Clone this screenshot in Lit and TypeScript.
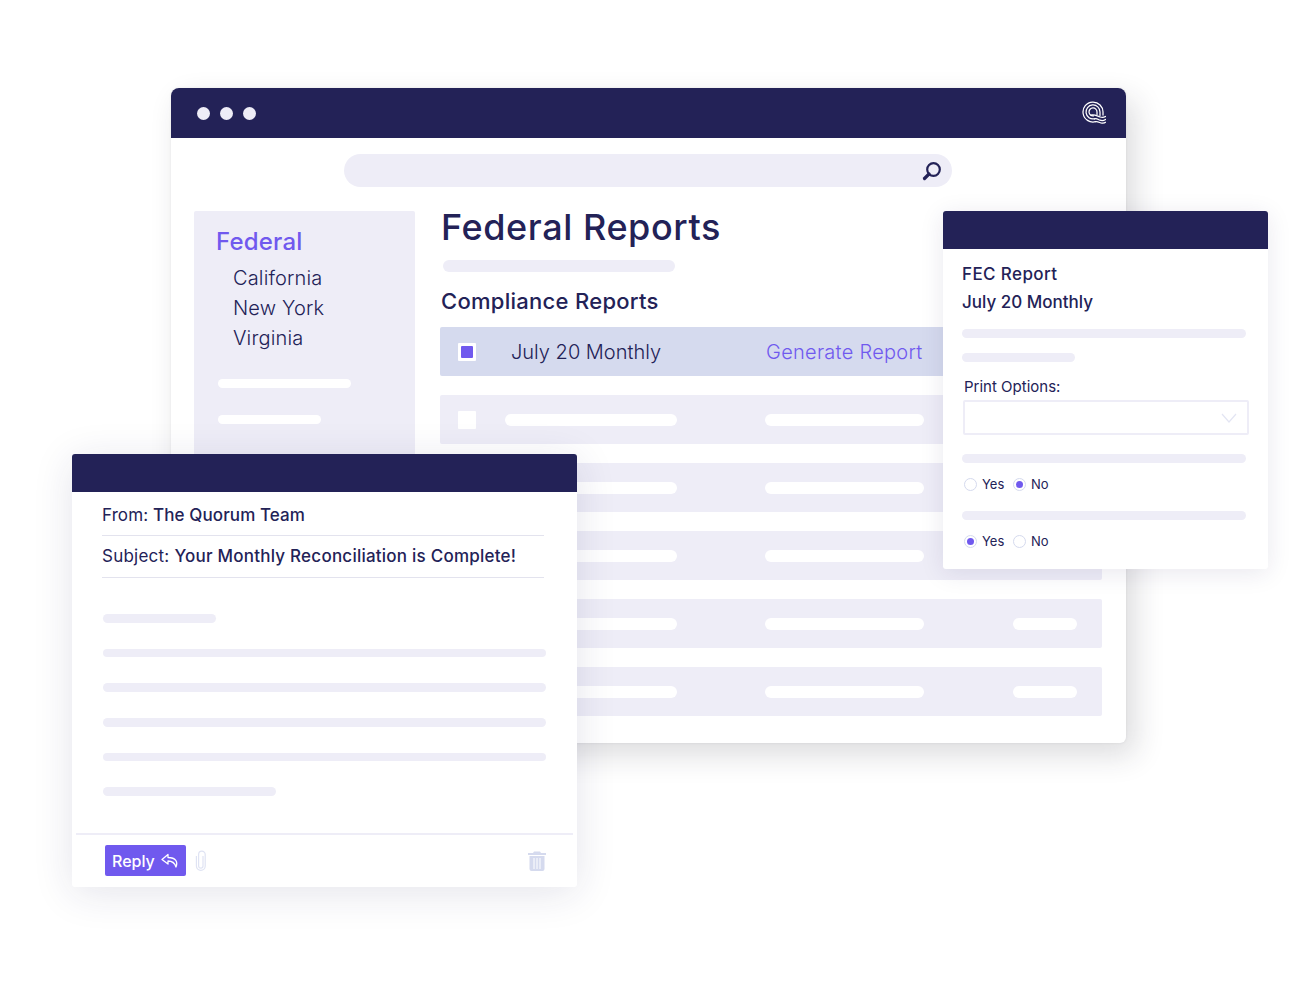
import { LitElement, html, css } from "lit";
import { customElement } from "lit/decorators.js";

@customElement("app-root")
export class AppRoot extends LitElement {
  static styles = css`
    :host { display: block; width: 1300px; height: 999px; position: relative; background: #fff; overflow: hidden;
      font-family: "Inter", "Liberation Sans", sans-serif; color: #232257; }
    .win { position: absolute; background: #fff; display: flex; flex-direction: column; box-sizing: border-box; }
    .main { left: 171px; top: 88px; width: 955px; height: 655px; border-radius: 8px 8px 6px 6px;
      box-shadow: 9px 12px 30px rgba(40,40,50,.16), 0 0 3px rgba(40,40,50,.08); }
    .bar { background: #232257; flex: none; }
    .main > .bar { height: 50px; border-radius: 8px 8px 0 0; display: flex; align-items: center; padding: 0 20px 0 26px; gap: 10px; }
    .dot { width: 13px; height: 13px; border-radius: 50%; background: #eeedf7; }
    .logo { margin-left: auto; display: block; }
    .search { margin: 16px 0 0 173px; width: 608px; height: 33px; border-radius: 17px; background: #eeedf7; flex: none;
      display: flex; align-items: center; justify-content: flex-end; padding-right: 9px; box-sizing: border-box; }
    .body { display: flex; margin: 24px 24px 0 23px; gap: 25px; flex: 1; min-height: 0; }
    .side { width: 221px; height: 300px; background: #eeedf7; border-radius: 2px; padding: 16px 0 0 22px; box-sizing: border-box; flex: none; }
    .side .fed { font-size: 24px; line-height: 30px; color: #7059ee; font-weight: 500; letter-spacing: .2px; }
    .side ul { list-style: none; margin: 6px 0 0 17px; padding: 0; font-size: 20px; line-height: 30px; font-weight: 300; letter-spacing: .15px; }
    .side .p1 { margin: 26px 0 0 2px; width: 133px; }
    .side .p2 { margin: 27px 0 0 2px; width: 103px; }
    .pill { height: 9px; border-radius: 5px; background: #fff; }
    .content { flex: 1; min-width: 0; }
    h1 { margin: -4px 0 0 1px; font-size: 36px; line-height: 40px; font-weight: 500; letter-spacing: .58px; }
    .sub { width: 232px; height: 12px; border-radius: 6px; background: #eeedf7; margin: 13px 0 0 3px; }
    h2 { margin: 15px 0 0 1px; font-size: 22px; line-height: 28px; font-weight: 500; letter-spacing: .28px; }
    .rows { display: flex; flex-direction: column; gap: 19px; margin-top: 12px; }
    .row { height: 49px; background: #eeedf7; border-radius: 2px; display: flex; align-items: center; padding-left: 18px; box-sizing: border-box; }
    .row.sel { background: #d5daee; font-size: 20px; font-weight: 300; }
    .check { width: 18px; height: 18px; background: #fff; border-radius: 1px; flex: none; display: flex; align-items: center; justify-content: center; }
    .check i { width: 12px; height: 12px; background: #7059ee; border-radius: 1px; }
    .row .name { margin-left: 35px; width: 255px; }
    .row .gen { color: #7059ee; letter-spacing: .27px; }
    .row .a { margin-left: 29px; width: 172px; height: 12px; border-radius: 6px; background: #fff; }
    .row .b { margin-left: 88px; width: 159px; height: 12px; border-radius: 6px; background: #fff; }
    .row .c { margin-left: 89px; width: 64px; height: 12px; border-radius: 6px; background: #fff; }

    .fec { left: 943px; top: 211px; width: 325px; height: 358px; border-radius: 3px; box-shadow: 0 4px 24px rgba(35,34,87,.10); }
    .fec > .bar { height: 38px; border-radius: 3px 3px 0 0; }
    .fec .in { padding: 11px 19px 0 19px; display: flex; flex-direction: column; }
    .fec b { font-size: 17px; line-height: 28px; font-weight: 500; }
    .fec b.ttl { letter-spacing: .4px; }
    .lav { height: 9px; border-radius: 5px; background: #eeedf7; }
    .fec .l1 { margin-top: 13px; width: 284px; }
    .fec .l2 { margin-top: 15px; width: 113px; }
    .fec label { font-size: 15px; line-height: 20px; margin: 15px 0 0 2px; }
    .select { margin: 3px 0 0 1px; width: 286px; height: 35px; box-sizing: border-box; border: 2px solid #eeedf7; border-radius: 2px;
      display: flex; align-items: center; justify-content: flex-end; padding-right: 10px; }
    .fec .l3 { margin-top: 19px; width: 284px; }
    .radios { display: flex; align-items: center; height: 20px; margin: 11px 0 0 2px; font-size: 13px; }
    .fec .l4 { margin-top: 17px; width: 284px; }
    .r { width: 13px; height: 13px; border: 1px solid #d5daee; border-radius: 50%; box-sizing: border-box; flex: none; display: flex; align-items: center; justify-content: center; background: #fff; }
    .r i { width: 7px; height: 7px; border-radius: 50%; background: #7059ee; }
    .radios span { margin-left: 5px; width: 31px; }

    .mail { left: 72px; top: 454px; width: 505px; height: 433px; border-radius: 3px; box-shadow: 0 6px 40px rgba(35,34,87,.12); }
    .mail > .bar { height: 38px; border-radius: 3px 3px 0 0; }
    .hdr { margin: 0 33px 0 30px; font-size: 17px; line-height: 24px; border-bottom: 1px solid #e3e3ee; padding: 11px 0 8px 0; letter-spacing: .1px; }
    .hdr b { font-weight: 500; }
    .hdr.subj { padding-top: 8px; padding-bottom: 9px; letter-spacing: .23px; }
    .text { margin: 36px 31px 0 31px; display: flex; flex-direction: column; gap: 26px; }
    .text .lav { height: 8.7px; }
    .text .s1 { width: 113px; }
    .text .s2 { width: 173px; }
    .foot { margin: auto 4px 0 4px; border-top: 2px solid #eeedf7; height: 54px; box-sizing: border-box; display: flex; align-items: center; padding: 0 27px 0 29px; }
    .reply { width: 81px; height: 31px; background: #7059ee; color: #fff; border-radius: 2px; font-size: 16px; font-weight: 500; display: flex; align-items: center; gap: 6px; padding-left: 7px; box-sizing: border-box; margin-top: -1px; }
    .clip { margin-left: 9px; display: block; }
    .trash { margin-left: auto; display: block; margin-top: -1px; }
  `;

  private logo() {
    return html`<svg class="logo" width="24" height="24" viewBox="0 0 24 24" fill="none" stroke="#fff" stroke-width="1.25" stroke-linecap="round">
      <path d="M13.500 20.700A10 10 0 1 1 21 11.500V14" />
      <path d="M12.500 17.800A7 7 0 1 1 18 11V14.500" />
      <path d="M11.500 14.900A4 4 0 1 1 15 11V13.500" />
      <path d="M9 14.200C12 13 15 15 18 16S22 16.500 23.500 15.500" />
      <path d="M12.500 17.800C15 17 16 18.500 18 19.200S22 19.500 23.500 18.500" />
      <path d="M13.500 20.700C16 20.200 18 22 20 22.200S22.800 22 23.500 21.300" />
    </svg>`;
  }

  private row() {
    return html`<div class="row"><div class="check"></div><div class="a"></div><div class="b"></div><div class="c"></div></div>`;
  }

  private radio(on: boolean) {
    return html`<div class="r">${on ? html`<i></i>` : ""}</div>`;
  }

  render() {
    return html`
      <div class="win main">
        <div class="bar"><div class="dot"></div><div class="dot"></div><div class="dot"></div>${this.logo()}</div>
        <div class="search">
          <svg width="22" height="22" viewBox="0 0 22 22" fill="none" stroke="#232257">
            <circle cx="12.500" cy="9.500" r="6.300" stroke-width="2.200" />
            <path d="M8 14 L3.500 18.500" stroke-width="3.200" stroke-linecap="round" />
          </svg>
        </div>
        <div class="body">
          <div class="side">
            <div class="fed">Federal</div>
            <ul><li>California</li><li>New York</li><li>Virginia</li></ul>
            <div class="pill p1"></div>
            <div class="pill p2"></div>
          </div>
          <div class="content">
            <h1>Federal Reports</h1>
            <div class="sub"></div>
            <h2>Compliance Reports</h2>
            <div class="rows">
              <div class="row sel"><div class="check"><i></i></div><div class="name">July 20 Monthly</div><div class="gen">Generate Report</div></div>
              ${this.row()}${this.row()}${this.row()}${this.row()}${this.row()}
            </div>
          </div>
        </div>
      </div>

      <div class="win fec">
        <div class="bar"></div>
        <div class="in">
          <b class="ttl">FEC Report</b>
          <b>July 20 Monthly</b>
          <div class="lav l1"></div>
          <div class="lav l2"></div>
          <label>Print Options:</label>
          <div class="select">
            <svg width="16" height="10" viewBox="0 0 16 10" fill="none" stroke="#e3e5f3" stroke-width="1.200"><path d="M1 1l7 8 7-8" /></svg>
          </div>
          <div class="lav l3"></div>
          <div class="radios">${this.radio(false)}<span>Yes</span>${this.radio(true)}<span>No</span></div>
          <div class="lav l4"></div>
          <div class="radios">${this.radio(true)}<span>Yes</span>${this.radio(false)}<span>No</span></div>
        </div>
      </div>

      <div class="win mail">
        <div class="bar"></div>
        <div class="hdr">From: <b>The Quorum Team</b></div>
        <div class="hdr subj">Subject: <b>Your Monthly Reconciliation is Complete!</b></div>
        <div class="text">
          <div class="lav s1"></div>
          <div class="lav"></div><div class="lav"></div><div class="lav"></div><div class="lav"></div>
          <div class="lav s2"></div>
        </div>
        <div class="foot">
          <div class="reply">Reply
            <svg width="18" height="16" viewBox="0 0 18 16" fill="none" stroke="#fff" stroke-width="1.300" stroke-linejoin="round" stroke-linecap="round">
              <path d="M7 1.500 L1 6.500 L7 11 V8 C11 8 13.500 9 15 14 C17 9 15 4.500 7 4.500 Z" />
            </svg>
          </div>
          <svg class="clip" width="12" height="22" viewBox="0 0 12 22" fill="none" stroke="#dfe3f3" stroke-width="1.200">
            <path d="M8 6v10a2.200 2.200 0 0 1-4.400 0V4.500a3.300 3.300 0 0 1 6.600 0V16a4.400 4.400 0 0 1-8.800 0V6" />
          </svg>
          <svg class="trash" width="18" height="21" viewBox="0 0 18 21">
            <path fill="#d5daee" d="M6 1.500h6l1 1.500h5v2H0V3h5zM1.500 6h15v13a2 2 0 0 1-2 2h-11a2 2 0 0 1-2-2z" />
            <path stroke="#fff" stroke-width="1" d="M6 8v11M9 8v11M12 8v11" />
          </svg>
        </div>
      </div>
    `;
  }
}
